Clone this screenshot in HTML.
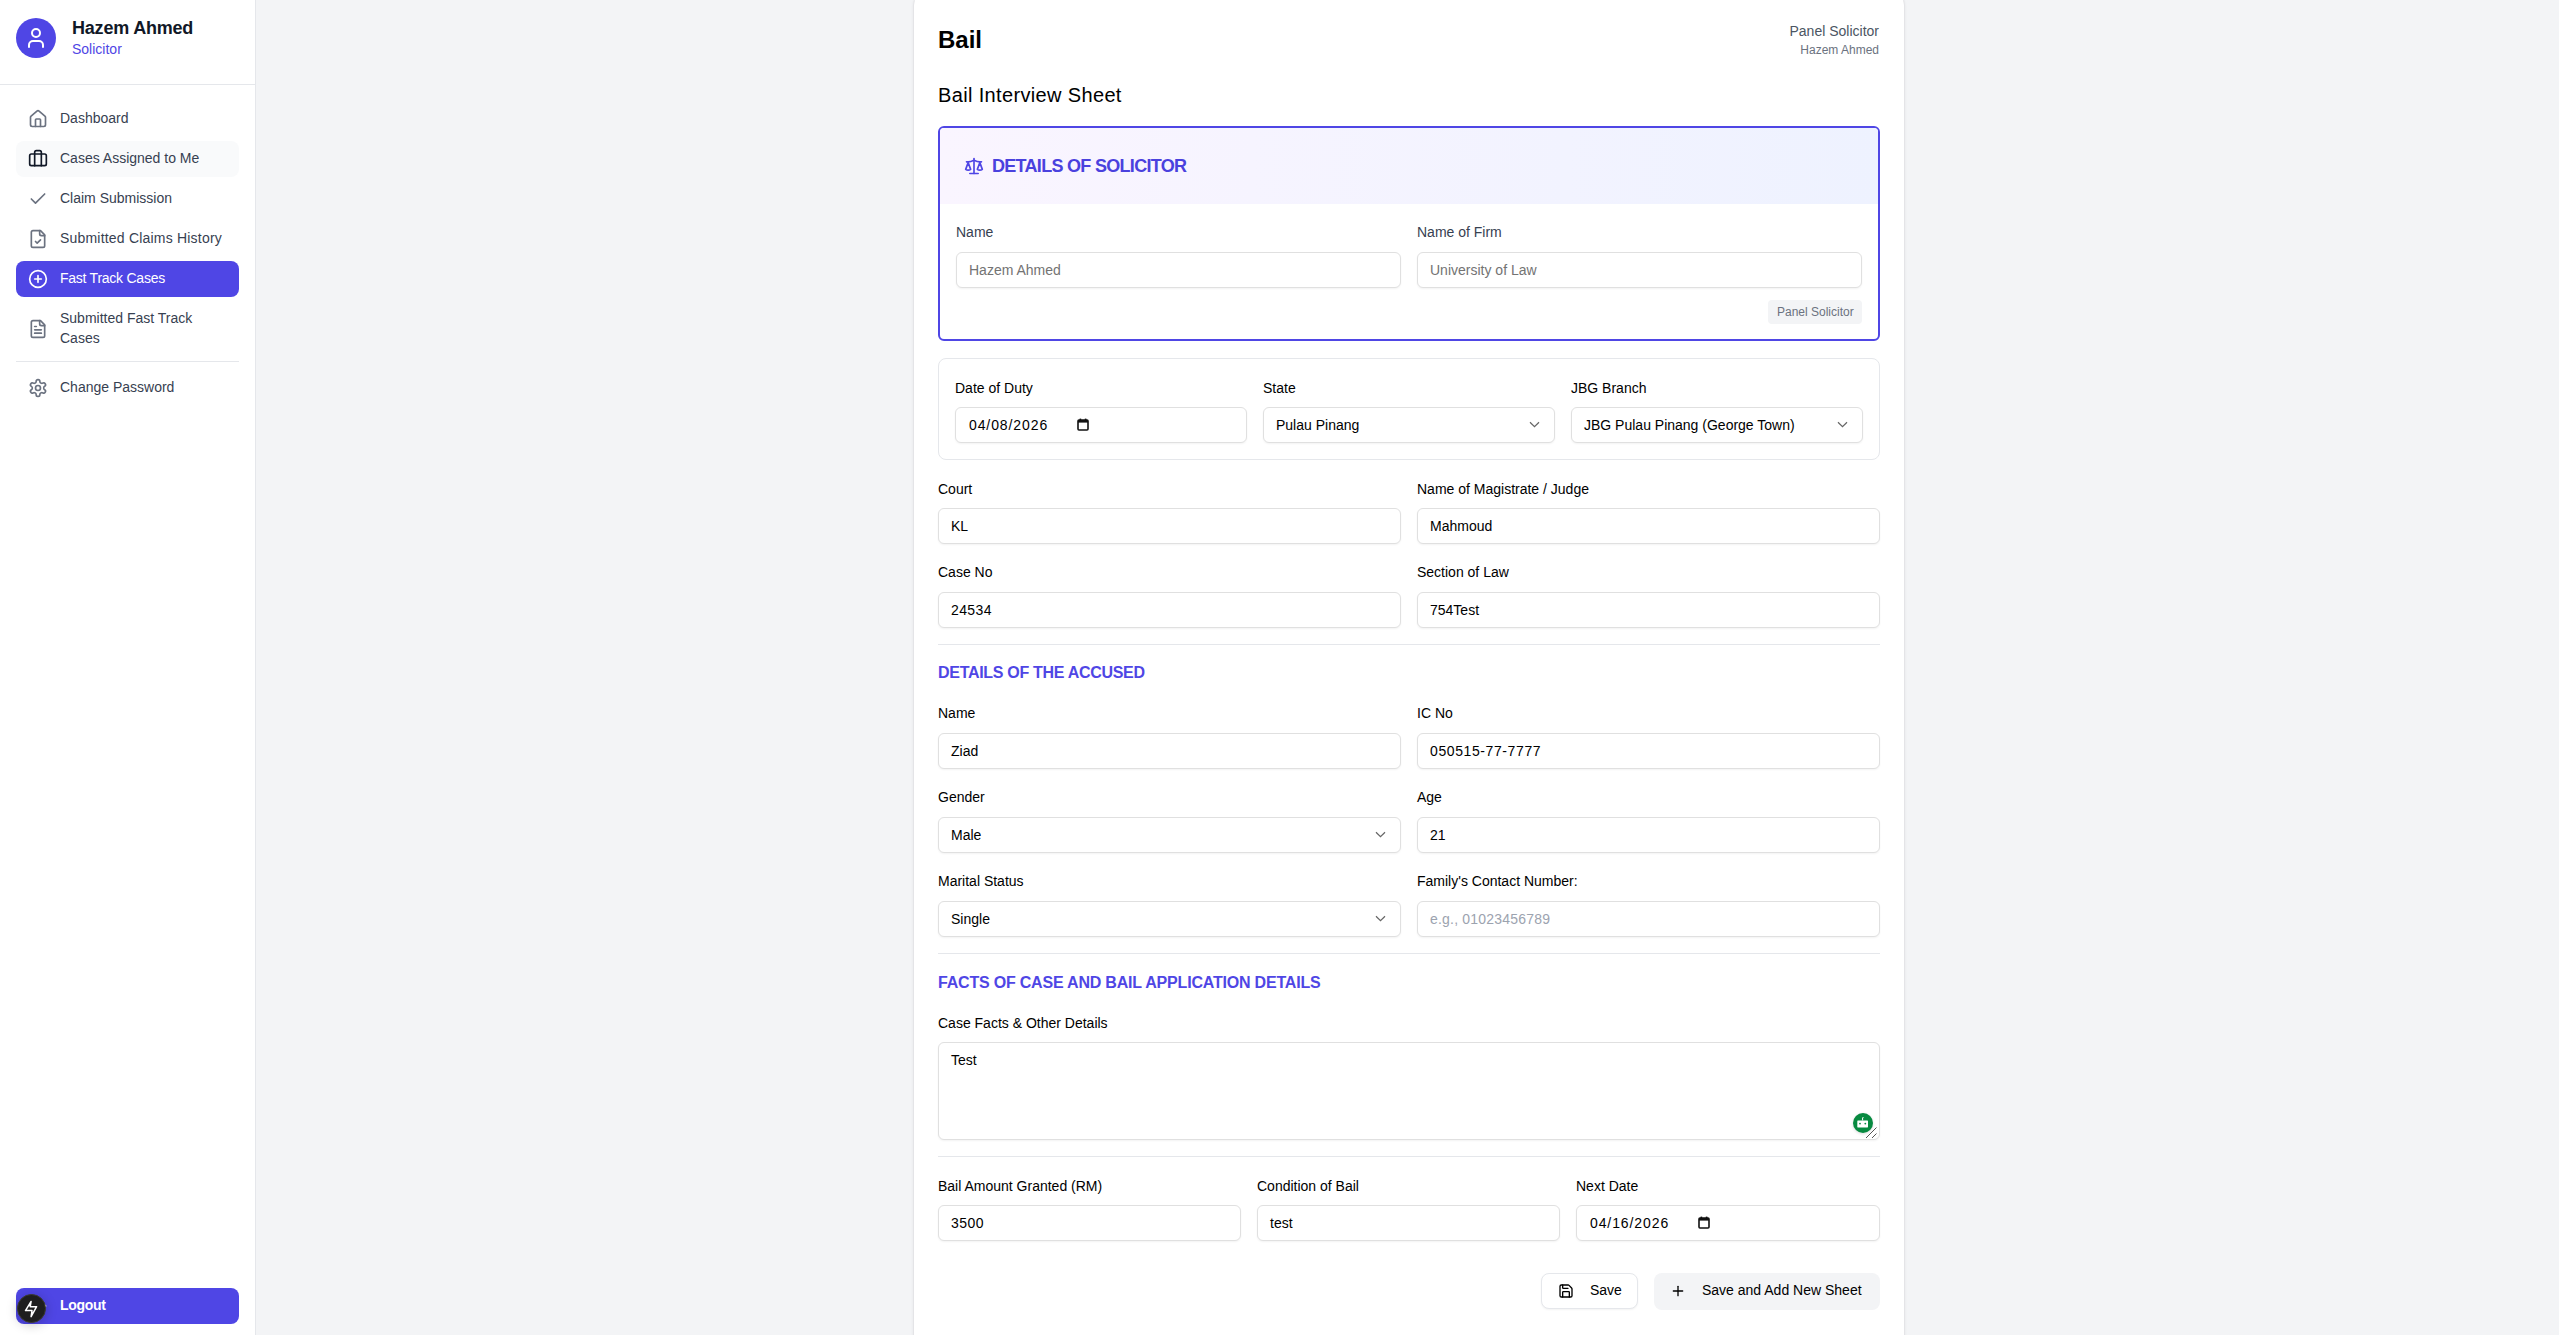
<!DOCTYPE html>
<html><head><meta charset="utf-8"><title>Bail Interview Sheet</title>
<style>
html,body{margin:0;padding:0}
body{width:2559px;height:1335px;overflow:hidden;position:relative;background:#f3f4f6;font-family:"Liberation Sans",sans-serif;-webkit-font-smoothing:antialiased}
.t{position:absolute;white-space:nowrap}
.ic{position:absolute}
.inp{position:absolute;box-sizing:border-box;border:1px solid #e0e0e0;border-radius:6px;background:#fff;box-shadow:0 1px 2px rgba(0,0,0,0.05)}
.abs{position:absolute;box-sizing:border-box}
</style></head><body>

<div class="abs" style="left:0;top:0;width:256px;height:1335px;background:#fff;border-right:1px solid #e5e7eb"></div>
<div class="abs" style="left:0;top:84px;width:255px;height:1px;background:#e5e7eb"></div>
<div class="abs" style="left:16px;top:18px;width:40px;height:40px;border-radius:50%;background:#4f46e5"></div>
<svg class="ic" style="left:24px;top:26px;" width="24" height="24" viewBox="0 0 24 24" fill="none" stroke="#fff" stroke-width="2" stroke-linecap="round" stroke-linejoin="round"><path d="M19 21v-2a4 4 0 0 0-4-4H9a4 4 0 0 0-4 4v2"/><circle cx="12" cy="7" r="4"/></svg>
<div class="t" style="left:72px;top:16.26px;font-size:18px;line-height:25px;color:#111827;font-weight:700;letter-spacing:-0.2px;">Hazem Ahmed</div>
<div class="t" style="left:72px;top:39.15px;font-size:14px;line-height:20px;color:#4f46e5;">Solicitor</div>
<div class="abs" style="left:16px;top:141px;width:223px;height:36px;border-radius:8px;background:#f9fafb"></div>
<div class="abs" style="left:16px;top:261px;width:223px;height:36px;border-radius:8px;background:#4f46e5"></div>
<svg class="ic" style="left:28px;top:109px;" width="20" height="20" viewBox="0 0 24 24" fill="none" stroke="#6b7280" stroke-width="2" stroke-linecap="round" stroke-linejoin="round"><path d="M15 21v-8a1 1 0 0 0-1-1h-4a1 1 0 0 0-1 1v8"/><path d="M3 10a2 2 0 0 1 .709-1.528l7-5.999a2 2 0 0 1 2.582 0l7 5.999A2 2 0 0 1 21 10v9a2 2 0 0 1-2 2H5a2 2 0 0 1-2-2z"/></svg>
<div class="t" style="left:60px;top:108.15px;font-size:14px;line-height:20px;color:#374151;">Dashboard</div>
<svg class="ic" style="left:28px;top:149px;" width="20" height="20" viewBox="0 0 24 24" fill="none" stroke="#111827" stroke-width="2" stroke-linecap="round" stroke-linejoin="round"><path d="M16 20V4a2 2 0 0 0-2-2h-4a2 2 0 0 0-2 2v16"/><rect width="20" height="14" x="2" y="6" rx="2"/></svg>
<div class="t" style="left:60px;top:148.15px;font-size:14px;line-height:20px;color:#374151;">Cases Assigned to Me</div>
<svg class="ic" style="left:28px;top:189px;" width="20" height="20" viewBox="0 0 24 24" fill="none" stroke="#6b7280" stroke-width="2" stroke-linecap="round" stroke-linejoin="round"><path d="M20 6 9 17l-5-5"/></svg>
<div class="t" style="left:60px;top:188.15px;font-size:14px;line-height:20px;color:#374151;">Claim Submission</div>
<svg class="ic" style="left:28px;top:229px;" width="20" height="20" viewBox="0 0 24 24" fill="none" stroke="#6b7280" stroke-width="2" stroke-linecap="round" stroke-linejoin="round"><path d="M15 2H6a2 2 0 0 0-2 2v16a2 2 0 0 0 2 2h12a2 2 0 0 0 2-2V7Z"/><path d="M14 2v4a2 2 0 0 0 2 2h4"/><path d="m9 15 2 2 4-4"/></svg>
<div class="t" style="left:60px;top:228.15px;font-size:14px;line-height:20px;color:#374151;letter-spacing:0.2px;">Submitted Claims History</div>
<svg class="ic" style="left:28px;top:269px;" width="20" height="20" viewBox="0 0 24 24" fill="none" stroke="#ffffff" stroke-width="2" stroke-linecap="round" stroke-linejoin="round"><circle cx="12" cy="12" r="10"/><path d="M8 12h8"/><path d="M12 8v8"/></svg>
<div class="t" style="left:60px;top:268.15px;font-size:14px;line-height:20px;color:#ffffff;letter-spacing:-0.25px;">Fast Track Cases</div>
<svg class="ic" style="left:28px;top:319px;" width="20" height="20" viewBox="0 0 24 24" fill="none" stroke="#6b7280" stroke-width="2" stroke-linecap="round" stroke-linejoin="round"><path d="M15 2H6a2 2 0 0 0-2 2v16a2 2 0 0 0 2 2h12a2 2 0 0 0 2-2V7Z"/><path d="M14 2v4a2 2 0 0 0 2 2h4"/><path d="M10 9H8"/><path d="M16 13H8"/><path d="M16 17H8"/></svg>
<div class="t" style="left:60px;top:308.15px;font-size:14px;line-height:20px;color:#374151;">Submitted Fast Track</div>
<div class="t" style="left:60px;top:328.15px;font-size:14px;line-height:20px;color:#374151;">Cases</div>
<div class="abs" style="left:16px;top:361px;width:223px;height:1px;background:#e5e7eb"></div>
<svg class="ic" style="left:28px;top:378px;" width="20" height="20" viewBox="0 0 24 24" fill="none" stroke="#6b7280" stroke-width="2" stroke-linecap="round" stroke-linejoin="round"><path d="M12.22 2h-.44a2 2 0 0 0-2 2v.18a2 2 0 0 1-1 1.73l-.43.25a2 2 0 0 1-2 0l-.15-.08a2 2 0 0 0-2.73.73l-.22.38a2 2 0 0 0 .73 2.73l.15.1a2 2 0 0 1 1 1.72v.51a2 2 0 0 1-1 1.74l-.15.09a2 2 0 0 0-.73 2.73l.22.38a2 2 0 0 0 2.73.73l.15-.08a2 2 0 0 1 2 0l.43.25a2 2 0 0 1 1 1.73V20a2 2 0 0 0 2 2h.44a2 2 0 0 0 2-2v-.18a2 2 0 0 1 1-1.73l.43-.25a2 2 0 0 1 2 0l.15.08a2 2 0 0 0 2.73-.73l.22-.39a2 2 0 0 0-.73-2.73l-.15-.08a2 2 0 0 1-1-1.74v-.5a2 2 0 0 1 1-1.74l.15-.09a2 2 0 0 0 .73-2.73l-.22-.38a2 2 0 0 0-2.73-.73l-.15.08a2 2 0 0 1-2 0l-.43-.25a2 2 0 0 1-1-1.73V4a2 2 0 0 0-2-2z"/><circle cx="12" cy="12" r="3"/></svg>
<div class="t" style="left:60px;top:377.15px;font-size:14px;line-height:20px;color:#374151;">Change Password</div>
<div class="abs" style="left:16px;top:1288px;width:223px;height:36px;border-radius:8px;background:#4f46e5"></div>
<svg class="ic" style="left:28px;top:1296px;" width="20" height="20" viewBox="0 0 24 24" fill="none" stroke="#fff" stroke-width="2" stroke-linecap="round" stroke-linejoin="round"><path d="M9 21H5a2 2 0 0 1-2-2V5a2 2 0 0 1 2-2h4"/><polyline points="16 17 21 12 16 7"/><line x1="21" x2="9" y1="12" y2="12"/></svg>
<div class="t" style="left:60px;top:1295.15px;font-size:14px;line-height:20px;color:#ffffff;font-weight:700;letter-spacing:-0.3px;">Logout</div>
<div class="abs" style="left:16.5px;top:1294.3px;width:29px;height:29px;border-radius:50%;background:#1e1e1e;border:1px solid #3a3a2e;box-shadow:0 2px 12px rgba(0,0,0,0.22)"></div>
<svg class="ic" style="left:14px;top:1290px" width="36" height="38" viewBox="14 1290 36 38"><path d="M31.1 1301.4 L25.5 1310.6 L32 1310.6 L31.1 1316.7 L36.6 1306.7 L30.2 1306.7 Z" fill="none" stroke="#fff" stroke-width="1.5" stroke-linejoin="round"/></svg>
<div class="abs" style="left:913px;top:-7px;width:992px;height:1400px;background:#fff;border:1px solid #e4e4e7;border-radius:12px;box-shadow:0 1px 3px rgba(0,0,0,0.06)"></div>
<div class="t" style="left:938px;top:22.68px;font-size:24px;line-height:34px;color:#000;font-weight:700;">Bail</div>
<div class="t" style="right:680px;top:21.15px;font-size:14px;line-height:20px;color:#4b5563;text-align:right;">Panel Solicitor</div>
<div class="t" style="right:680px;top:42.34px;font-size:12px;line-height:17px;color:#6b7280;text-align:right;">Hazem Ahmed</div>
<div class="t" style="left:938px;top:81.07px;font-size:20px;line-height:28px;color:#000;letter-spacing:0.35px;">Bail Interview Sheet</div>
<div class="abs" style="left:938px;top:126px;width:942px;height:215px;border:2px solid #4f46e5;border-radius:6px;overflow:hidden;background:#fff"><div style="position:absolute;left:0;top:0;right:0;height:76px;background:linear-gradient(to right,#faf5ff,#eef2ff)"></div></div>
<svg class="ic" style="left:964px;top:156px;" width="20" height="20" viewBox="0 0 24 24" fill="none" stroke="#4f46e5" stroke-width="2" stroke-linecap="round" stroke-linejoin="round"><path d="m16 16 3-8 3 8c-.87.65-1.92 1-3 1s-2.13-.35-3-1Z"/><path d="m2 16 3-8 3 8c-.87.65-1.92 1-3 1s-2.13-.35-3-1Z"/><path d="M7 21h10"/><path d="M12 3v18"/><path d="M3 7h2c2 0 5-1 7-2 2 1 5 2 7 2h2"/></svg>
<div class="t" style="left:992px;top:153.76px;font-size:18px;line-height:25px;color:#4a41de;font-weight:700;letter-spacing:-0.7px;">DETAILS OF SOLICITOR</div>
<div class="t" style="left:956px;top:222.15px;font-size:14px;line-height:20px;color:#374151;">Name</div>
<div class="t" style="left:1417px;top:222.15px;font-size:14px;line-height:20px;color:#374151;">Name of Firm</div>
<div class="inp" style="left:956px;top:252px;width:445px;height:36px;"></div>
<div class="t" style="left:969px;top:260.15px;font-size:14px;line-height:20px;color:#737373;">Hazem Ahmed</div>
<div class="inp" style="left:1417px;top:252px;width:445px;height:36px;"></div>
<div class="t" style="left:1430px;top:260.15px;font-size:14px;line-height:20px;color:#737373;">University of Law</div>
<div class="abs" style="left:1768px;top:300px;width:94px;height:24px;border-radius:4px;background:#f3f4f6"></div>
<div class="t" style="left:1777px;top:304.34px;font-size:12px;line-height:17px;color:#6b7280;">Panel Solicitor</div>
<div class="abs" style="left:938px;top:358px;width:942px;height:102px;border:1px solid #e5e7eb;border-radius:8px"></div>
<div class="t" style="left:955px;top:378.15px;font-size:14px;line-height:20px;color:#000;">Date of Duty</div>
<div class="t" style="left:1263px;top:378.15px;font-size:14px;line-height:20px;color:#000;">State</div>
<div class="t" style="left:1571px;top:378.15px;font-size:14px;line-height:20px;color:#000;">JBG Branch</div>
<div class="inp" style="left:955px;top:407px;width:292px;height:36px;"></div>
<div class="t" style="left:969px;top:415.15px;font-size:14px;line-height:20px;color:#000;letter-spacing:0.9px;">04/08/2026</div>
<svg width="12" height="13" viewBox="0 0 12 13" style="position:absolute;left:1077px;top:418px"><rect x="1" y="2" width="10" height="10" rx="1" fill="none" stroke="#111" stroke-width="1.6"/><rect x="1" y="2" width="10" height="2.6" fill="#111"/><rect x="2.6" y="0.6" width="1.6" height="2" fill="#111"/><rect x="7.8" y="0.6" width="1.6" height="2" fill="#111"/></svg>
<div class="inp" style="left:1263px;top:407px;width:292px;height:36px;"></div>
<div class="t" style="left:1276px;top:415.15px;font-size:14px;line-height:20px;color:#000;">Pulau Pinang</div>
<svg width="11" height="7" viewBox="0 0 11 7" style="position:absolute;left:1529px;top:421px"><path d="M1 1.2 5.5 5.6 10 1.2" fill="none" stroke="#666" stroke-width="1.25"/></svg>
<div class="inp" style="left:1571px;top:407px;width:292px;height:36px;"></div>
<div class="t" style="left:1584px;top:415.15px;font-size:14px;line-height:20px;color:#000;">JBG Pulau Pinang (George Town)</div>
<svg width="11" height="7" viewBox="0 0 11 7" style="position:absolute;left:1837px;top:421px"><path d="M1 1.2 5.5 5.6 10 1.2" fill="none" stroke="#666" stroke-width="1.25"/></svg>
<div class="t" style="left:938px;top:478.75px;font-size:14px;line-height:20px;color:#000;">Court</div>
<div class="t" style="left:1417px;top:478.75px;font-size:14px;line-height:20px;color:#000;">Name of Magistrate / Judge</div>
<div class="inp" style="left:938px;top:508px;width:463px;height:36px;"></div>
<div class="t" style="left:951px;top:516.15px;font-size:14px;line-height:20px;color:#000;">KL</div>
<div class="inp" style="left:1417px;top:508px;width:463px;height:36px;"></div>
<div class="t" style="left:1430px;top:516.15px;font-size:14px;line-height:20px;color:#000;">Mahmoud</div>
<div class="t" style="left:938px;top:562.45px;font-size:14px;line-height:20px;color:#000;">Case No</div>
<div class="t" style="left:1417px;top:562.45px;font-size:14px;line-height:20px;color:#000;">Section of Law</div>
<div class="inp" style="left:938px;top:592px;width:463px;height:36px;"></div>
<div class="t" style="left:951px;top:600.15px;font-size:14px;line-height:20px;color:#000;letter-spacing:0.4px;">24534</div>
<div class="inp" style="left:1417px;top:592px;width:463px;height:36px;"></div>
<div class="t" style="left:1430px;top:600.15px;font-size:14px;line-height:20px;color:#000;">754Test</div>
<div class="abs" style="left:938px;top:644px;width:942px;height:1px;background:#e5e7eb"></div>
<div class="t" style="left:938px;top:662.46px;font-size:16px;line-height:22px;color:#4f46e5;font-weight:700;letter-spacing:-0.3px;">DETAILS OF THE ACCUSED</div>
<div class="t" style="left:938px;top:703.15px;font-size:14px;line-height:20px;color:#000;">Name</div>
<div class="t" style="left:1417px;top:703.15px;font-size:14px;line-height:20px;color:#000;">IC No</div>
<div class="inp" style="left:938px;top:733px;width:463px;height:36px;"></div>
<div class="t" style="left:951px;top:741.15px;font-size:14px;line-height:20px;color:#000;">Ziad</div>
<div class="inp" style="left:1417px;top:733px;width:463px;height:36px;"></div>
<div class="t" style="left:1430px;top:741.15px;font-size:14px;line-height:20px;color:#000;letter-spacing:0.6px;">050515-77-7777</div>
<div class="t" style="left:938px;top:787.15px;font-size:14px;line-height:20px;color:#000;">Gender</div>
<div class="t" style="left:1417px;top:787.15px;font-size:14px;line-height:20px;color:#000;">Age</div>
<div class="inp" style="left:938px;top:817px;width:463px;height:36px;"></div>
<div class="t" style="left:951px;top:825.15px;font-size:14px;line-height:20px;color:#000;">Male</div>
<svg width="11" height="7" viewBox="0 0 11 7" style="position:absolute;left:1375px;top:831px"><path d="M1 1.2 5.5 5.6 10 1.2" fill="none" stroke="#666" stroke-width="1.25"/></svg>
<div class="inp" style="left:1417px;top:817px;width:463px;height:36px;"></div>
<div class="t" style="left:1430px;top:825.15px;font-size:14px;line-height:20px;color:#000;">21</div>
<div class="t" style="left:938px;top:871.15px;font-size:14px;line-height:20px;color:#000;">Marital Status</div>
<div class="t" style="left:1417px;top:871.15px;font-size:14px;line-height:20px;color:#000;">Family's Contact Number:</div>
<div class="inp" style="left:938px;top:901px;width:463px;height:36px;"></div>
<div class="t" style="left:951px;top:909.15px;font-size:14px;line-height:20px;color:#000;">Single</div>
<svg width="11" height="7" viewBox="0 0 11 7" style="position:absolute;left:1375px;top:915px"><path d="M1 1.2 5.5 5.6 10 1.2" fill="none" stroke="#666" stroke-width="1.25"/></svg>
<div class="inp" style="left:1417px;top:901px;width:463px;height:36px;"></div>
<div class="t" style="left:1430px;top:909.15px;font-size:14px;line-height:20px;color:#9ca3af;letter-spacing:0.2px;">e.g., 01023456789</div>
<div class="abs" style="left:938px;top:953px;width:942px;height:1px;background:#e5e7eb"></div>
<div class="t" style="left:938px;top:971.96px;font-size:16px;line-height:22px;color:#4f46e5;font-weight:700;letter-spacing:-0.2px;">FACTS OF CASE AND BAIL APPLICATION DETAILS</div>
<div class="t" style="left:938px;top:1013.15px;font-size:14px;line-height:20px;color:#000;">Case Facts &amp; Other Details</div>
<div class="inp" style="left:938px;top:1042px;width:942px;height:98px;"></div>
<div class="t" style="left:951px;top:1050.15px;font-size:14px;line-height:20px;color:#000;">Test</div>
<div class="abs" style="left:1853px;top:1113px;width:20px;height:20px;border-radius:50%;background:#078a40;box-shadow:0 1px 3px rgba(0,0,0,0.15)"></div>
<svg class="ic" style="left:1853px;top:1113px" width="20" height="20" viewBox="0 0 20 20"><rect x="4.3" y="7.4" width="10.7" height="7" rx="0.6" fill="#fff"/><path d="M9.6 7.4 L9.6 5 L10.4 4" stroke="#fff" stroke-width="1" fill="none"/><circle cx="7" cy="10.6" r="0.9" fill="#0b8a45"/><circle cx="12.3" cy="10.6" r="0.9" fill="#0b8a45"/></svg>
<svg class="ic" style="left:1864px;top:1125px" width="14" height="14" viewBox="0 0 14 14"><path d="M2 13 L12.5 2.5 M8 13 L12.5 8.5" stroke="#555" stroke-width="1" fill="none"/></svg>
<div class="abs" style="left:938px;top:1156px;width:942px;height:1px;background:#e5e7eb"></div>
<div class="t" style="left:938px;top:1176.15px;font-size:14px;line-height:20px;color:#000;">Bail Amount Granted (RM)</div>
<div class="t" style="left:1257px;top:1176.15px;font-size:14px;line-height:20px;color:#000;">Condition of Bail</div>
<div class="t" style="left:1576px;top:1176.15px;font-size:14px;line-height:20px;color:#000;">Next Date</div>
<div class="inp" style="left:938px;top:1205px;width:303px;height:36px;"></div>
<div class="t" style="left:951px;top:1213.15px;font-size:14px;line-height:20px;color:#000;letter-spacing:0.5px;">3500</div>
<div class="inp" style="left:1257px;top:1205px;width:303px;height:36px;"></div>
<div class="t" style="left:1270px;top:1213.15px;font-size:14px;line-height:20px;color:#000;">test</div>
<div class="inp" style="left:1576px;top:1205px;width:304px;height:36px;"></div>
<div class="t" style="left:1590px;top:1213.15px;font-size:14px;line-height:20px;color:#000;letter-spacing:0.9px;">04/16/2026</div>
<svg width="12" height="13" viewBox="0 0 12 13" style="position:absolute;left:1698px;top:1216px"><rect x="1" y="2" width="10" height="10" rx="1" fill="none" stroke="#111" stroke-width="1.6"/><rect x="1" y="2" width="10" height="2.6" fill="#111"/><rect x="2.6" y="0.6" width="1.6" height="2" fill="#111"/><rect x="7.8" y="0.6" width="1.6" height="2" fill="#111"/></svg>
<div class="abs" style="left:1541px;top:1273px;width:97px;height:36px;border:1px solid #e5e7eb;border-radius:8px;background:#fff;box-shadow:0 1px 2px rgba(0,0,0,0.05)"></div>
<svg class="ic" style="left:1558px;top:1283px;" width="16" height="16" viewBox="0 0 24 24" fill="none" stroke="#000" stroke-width="2" stroke-linecap="round" stroke-linejoin="round"><path d="M15.2 3a2 2 0 0 1 1.4.6l3.8 3.8a2 2 0 0 1 .6 1.4V19a2 2 0 0 1-2 2H5a2 2 0 0 1-2-2V5a2 2 0 0 1 2-2z"/><path d="M17 21v-7a1 1 0 0 0-1-1H8a1 1 0 0 0-1 1v7"/><path d="M7 3v4a1 1 0 0 0 1 1h7"/></svg>
<div class="t" style="left:1590px;top:1280.15px;font-size:14px;line-height:20px;color:#000;">Save</div>
<div class="abs" style="left:1654px;top:1273px;width:226px;height:37px;border-radius:8px;background:#f3f4f6"></div>
<svg class="ic" style="left:1670px;top:1283px;" width="16" height="16" viewBox="0 0 24 24" fill="none" stroke="#000" stroke-width="2" stroke-linecap="round" stroke-linejoin="round"><path d="M5 12h14"/><path d="M12 5v14"/></svg>
<div class="t" style="left:1702px;top:1280.15px;font-size:14px;line-height:20px;color:#000;">Save and Add New Sheet</div>
</body></html>
